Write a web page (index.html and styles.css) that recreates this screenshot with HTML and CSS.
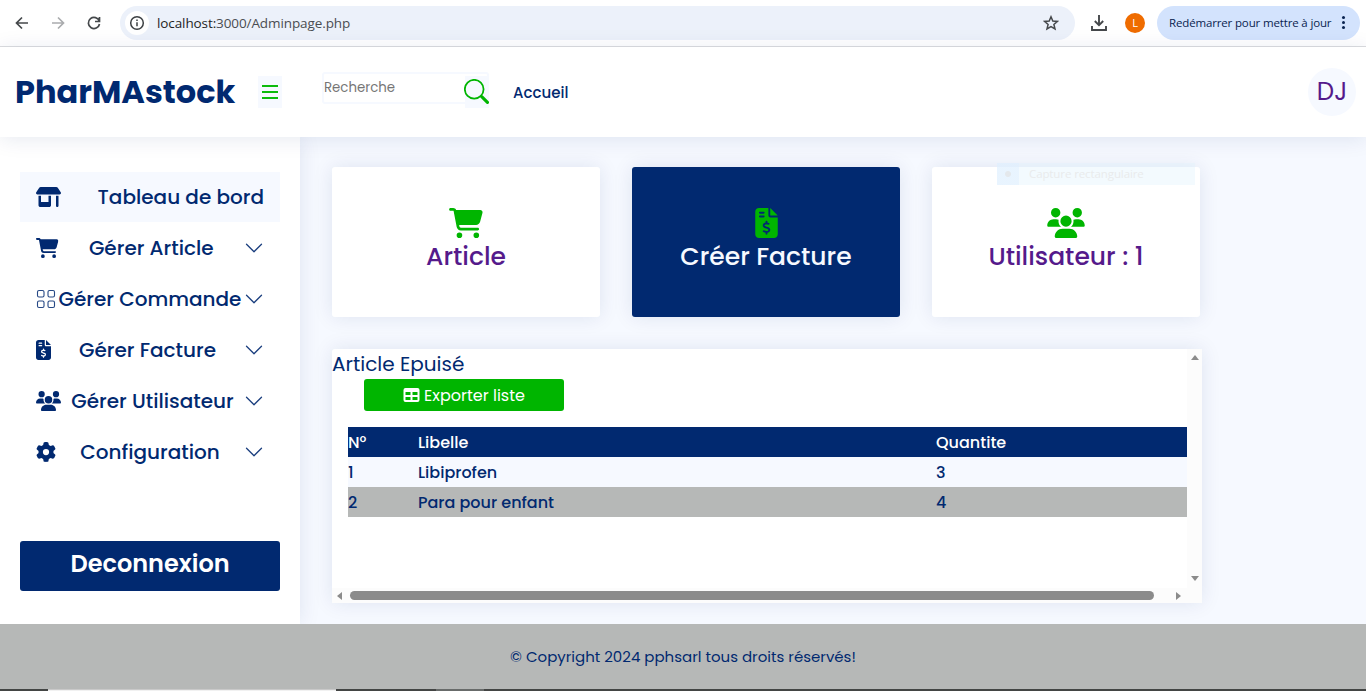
FILE: index.html
```html
<!DOCTYPE html>
<html lang="fr">
<head>
<meta charset="utf-8">
<title>PharMAstock</title>
<link rel="stylesheet" href="styles.css">
</head>
<body>
<svg class="sprite" aria-hidden="true">
  <symbol id="cart" viewBox="0 0 576 512"><path d="M0 24C0 10.7 10.7 0 24 0H69.5c22 0 41.5 12.8 50.6 32h411c26.3 0 45.5 25 38.6 50.4l-41 152.3c-8.5 31.4-37 53.3-69.5 53.3H170.7l5.4 28.5c2.2 11.3 12.1 19.5 23.6 19.5H488c13.3 0 24 10.7 24 24s-10.7 24-24 24H199.7c-34.6 0-64.3-24.6-70.7-58.5L77.4 54.5c-.7-3.8-4-6.5-7.9-6.5H24C10.7 48 0 37.3 0 24zM128 464a48 48 0 1 1 96 0 48 48 0 1 1 -96 0zm336-48a48 48 0 1 1 0 96 48 48 0 1 1 0-96z"/></symbol>
  <symbol id="invoice" viewBox="0 0 384 512"><path d="M64 0C28.7 0 0 28.7 0 64V448c0 35.3 28.7 64 64 64H320c35.3 0 64-28.7 64-64V160H256c-17.7 0-32-14.3-32-32V0H64zM256 0V128H384L256 0zM64 80c0-8.8 7.2-16 16-16h64c8.8 0 16 7.2 16 16s-7.2 16-16 16H80c-8.8 0-16-7.2-16-16zm0 64c0-8.8 7.2-16 16-16h64c8.8 0 16 7.2 16 16s-7.2 16-16 16H80c-8.8 0-16-7.2-16-16zm128 72c8.8 0 16 7.2 16 16v17.3c8.5 1.2 16.7 3.1 24.1 5.1c8.5 2.3 13.6 11 11.3 19.6s-11 13.6-19.6 11.3c-11.1-3-22-5.2-32.1-5.3c-8.4-.1-17.4 1.8-23.6 5.5c-5.7 3.4-8.1 7.3-8.1 12.8c0 3.7 1.3 6.5 7.3 10.1c6.9 4.1 16.6 7.1 29.2 10.9l.5 .1c11.3 3.4 25.3 7.6 36.3 14.6c12.1 7.6 22.4 19.7 22.7 38.2c.3 19.3-9.6 33.3-22.9 41.6c-7.7 4.8-16.4 7.6-25.1 9.1V440c0 8.8-7.2 16-16 16s-16-7.2-16-16V422.2c-11.2-2.1-21.7-5.7-30.9-8.9c-2.1-.7-4.2-1.4-6.2-2.1c-8.4-2.8-12.9-11.9-10.1-20.2s11.9-12.9 20.2-10.1c2.5 .8 4.8 1.6 7.1 2.4c13.6 4.6 24.6 8.4 36.3 8.7c9.1 .3 17.9-1.7 23.7-5.3c5.1-3.2 7.9-7.3 7.8-14c-.1-4.6-1.8-7.8-7.7-11.6c-6.8-4.3-16.5-7.4-29-11.2l-1.6-.5c-11-3.3-24.3-7.3-34.8-13.7c-12-7.2-22.6-18.9-22.7-37.3c-.1-19.4 10.8-32.8 23.8-40.5c7.5-4.4 15.8-7.2 24.1-8.7V232c0-8.8 7.2-16 16-16z"/></symbol>
  <symbol id="users" viewBox="0 0 640 512"><path d="M144 0a80 80 0 1 1 0 160A80 80 0 1 1 144 0zM512 0a80 80 0 1 1 0 160A80 80 0 1 1 512 0zM0 298.7C0 239.8 47.8 192 106.7 192h42.7c15.9 0 31 3.5 44.6 9.7c-1.3 7.2-1.9 14.7-1.9 22.3c0 38.2 16.8 72.5 43.3 96H21.3C9.6 320 0 310.4 0 298.7zM405.3 320c26.6-23.5 42.7-57.8 42.7-96c0-7.6-.7-15-1.9-22.3c13.6-6.3 28.7-9.7 44.6-9.7h42.7C592.2 192 640 239.8 640 298.7c0 11.8-9.6 21.3-21.3 21.3H405.3zM224 224a96 96 0 1 1 192 0 96 96 0 1 1 -192 0zM128 485.3C128 411.7 187.7 352 261.3 352H378.7C452.3 352 512 411.7 512 485.3c0 14.7-11.9 26.7-26.7 26.7H154.7c-14.7 0-26.7-11.9-26.7-26.7z"/></symbol>
  <symbol id="gear" viewBox="0 0 512 512"><path d="M495.9 166.6c3.2 8.7 .5 18.4-6.4 24.6l-43.3 39.4c1.1 8.3 1.7 16.8 1.7 25.4s-.6 17.1-1.7 25.4l43.3 39.4c6.9 6.2 9.6 15.9 6.4 24.6c-4.4 11.9-9.7 23.3-15.8 34.3l-4.7 8.1c-6.6 11-14 21.4-22.1 31.2c-5.9 7.2-15.7 9.6-24.5 6.8l-55.7-17.7c-13.4 10.3-28.2 18.9-44 25.4l-12.5 57.1c-2 9.1-9 16.3-18.2 17.8c-13.8 2.3-28 3.5-42.5 3.5s-28.7-1.2-42.5-3.5c-9.2-1.5-16.2-8.7-18.2-17.8l-12.5-57.1c-15.8-6.5-30.6-15.1-44-25.4L83.1 425.9c-8.8 2.8-18.6 .3-24.5-6.8c-8.1-9.8-15.5-20.2-22.1-31.2l-4.7-8.1c-6.1-11-11.4-22.4-15.8-34.3c-3.2-8.7-.5-18.4 6.4-24.6l43.3-39.4C64.6 273.1 64 264.6 64 256s.6-17.1 1.7-25.4L22.4 191.2c-6.9-6.2-9.6-15.9-6.4-24.6c4.4-11.9 9.7-23.3 15.8-34.3l4.7-8.1c6.6-11 14-21.4 22.1-31.2c5.9-7.2 15.7-9.6 24.5-6.8l55.7 17.7c13.4-10.3 28.2-18.9 44-25.4l12.5-57.1c2-9.1 9-16.3 18.2-17.8C227.3 1.2 241.5 0 256 0s28.7 1.2 42.5 3.5c9.2 1.5 16.2 8.7 18.2 17.8l12.5 57.1c15.8 6.5 30.6 15.1 44 25.4l55.7-17.7c8.8-2.8 18.6-.3 24.5 6.8c8.1 9.8 15.5 20.2 22.1 31.2l4.7 8.1c6.1 11 11.4 22.4 15.8 34.3zM256 336a80 80 0 1 0 0-160 80 80 0 1 0 0 160z"/></symbol>
  <symbol id="shop" viewBox="0 0 640 512"><path d="M36.8 192H603.2c20.3 0 36.8-16.5 36.8-36.8c0-7.3-2.2-14.4-6.2-20.4L558.2 21.4C549.3 8 534.4 0 518.3 0H121.7c-16 0-31 8-39.9 21.4L6.2 134.7c-4 6.1-6.2 13.2-6.2 20.4C0 175.5 16.5 192 36.8 192zM64 224V384v80c0 26.5 21.5 48 48 48H336c26.5 0 48-21.5 48-48V384 224H320V384H128V224H64zm448 0V480c0 17.7 14.3 32 32 32s32-14.3 32-32V224H512z"/></symbol>
  <symbol id="chevron" viewBox="0 0 16 16"><path d="M1.646 4.646a.5.5 0 0 1 .708 0L8 10.293l5.646-5.647a.5.5 0 0 1 .708.708l-6 6a.5.5 0 0 1-.708 0l-6-6a.5.5 0 0 1 0-.708"/></symbol>
  <symbol id="table" viewBox="0 0 512 448"><path fill-rule="evenodd" d="M64 0H448a64 64 0 0 1 64 64V384a64 64 0 0 1-64 64H64a64 64 0 0 1-64-64V64A64 64 0 0 1 64 0zM64 128V224H224V128zM288 128V224H448V128zM64 288V384H224V288zM288 288V384H448V288z"/></symbol>
</svg>

<div class="browser">
  <svg class="nav-ico" viewBox="0 0 16 16"><path d="M14 8H3M8 2.500 2.500 8 8 13.500"/></svg>
  <svg class="nav-ico dim" viewBox="0 0 16 16"><path d="M2 8h11M8 2.500 13.500 8 8 13.500"/></svg>
  <svg class="nav-ico" viewBox="0 0 16 16"><path d="M13.300 6.200A5.600 5.600 0 1 0 13.500 9M13.500 2v4.500H9"/></svg>
  <div class="address">
    <span class="info"><svg viewBox="0 0 16 16"><circle cx="8" cy="8" r="6.300"/><path d="M8 7.200v4M8 4.400v1.500"/></svg></span>
    <span class="url"><b>localhost:</b>3000/Adminpage.php</span>
    <svg class="star" viewBox="0 0 16 16"><path d="M8 1.800 9.800 6l4.600.4-3.500 3 1.100 4.500L8 11.500l-4 2.400 1.100-4.500-3.500-3L6.200 6z"/></svg>
  </div>
  <svg class="download" viewBox="0 0 18 18"><path d="M9 1v10M4.800 7 9 11.200 13.200 7M2 12v4h14v-4"/></svg>
  <span class="profile">L</span>
  <div class="update"><span>Redémarrer pour mettre à jour</span><i class="dots"></i></div>
</div>

<header class="topbar">
  <h1>PharMAstock</h1>
  <span class="burger"><i></i><i></i><i></i></span>
  <div class="search"><span>Recherche</span>
    <span class="search-btn"><svg viewBox="0 0 24 24"><circle cx="9.800" cy="9.800" r="9"/><path class="handle" d="m17 17 5.500 5.500"/></svg></span>
  </div>
  <a class="home">Accueil</a>
  <span class="avatar">DJ</span>
</header>

<div class="layout">
  <aside class="sidebar">
    <nav>
      <a class="item active"><svg class="w25"><use href="#shop"/></svg><span>Tableau de bord</span></a>
      <a class="item"><svg class="w23"><use href="#cart"/></svg><span>Gérer Article</span><svg class="w20 chev"><use href="#chevron"/></svg></a>
      <a class="item"><svg class="w20 grid" viewBox="0 0 20 20"><rect x="1.500" y="1.500" width="6.500" height="6.500" rx="1.500"/><rect x="12" y="1.500" width="6.500" height="6.500" rx="1.500"/><rect x="1.500" y="12" width="6.500" height="6.500" rx="1.500"/><rect x="12" y="12" width="6.500" height="6.500" rx="1.500"/></svg><span>Gérer Commande</span><svg class="w20 chev"><use href="#chevron"/></svg></a>
      <a class="item"><svg class="w15"><use href="#invoice"/></svg><span>Gérer Facture</span><svg class="w20 chev"><use href="#chevron"/></svg></a>
      <a class="item"><svg class="w25"><use href="#users"/></svg><span>Gérer Utilisateur</span><svg class="w20 chev"><use href="#chevron"/></svg></a>
      <a class="item"><svg class="w20"><use href="#gear"/></svg><span>Configuration</span><svg class="w20 chev"><use href="#chevron"/></svg></a>
    </nav>
    <button class="logout">Deconnexion</button>
  </aside>

  <main>
    <div class="cards">
      <a class="card"><svg class="c34"><use href="#cart"/></svg><span>Article</span></a>
      <a class="card dark"><svg class="c23"><use href="#invoice"/></svg><span>Créer Facture</span></a>
      <a class="card"><svg class="c38"><use href="#users"/></svg><span>Utilisateur : 1</span>
        <div class="snip"><i></i><span>Capture rectangulaire</span></div></a>
    </div>
    <section class="panel">
      <div class="content">
        <h2>Article Epuisé</h2>
        <button class="export"><svg><use href="#table"/></svg>Exporter liste</button>
        <div class="table">
          <div class="row head"><span>N°</span><span>Libelle</span><span>Quantite</span></div>
          <div class="row"><span>1</span><span>Libiprofen</span><span>3</span></div>
          <div class="row alt"><span>2</span><span>Para pour enfant</span><span>4</span></div>
        </div>
      </div>
      <div class="vbar"><i class="up"></i><i class="down"></i></div>
      <div class="hbar"><i class="left"></i><i class="thumb"></i><i class="right"></i></div>
    </section>
  </main>
</div>

<footer>© Copyright 2024 pphsarl tous droits réservés!</footer>
<div class="taskbar"><i class="task-search"></i><i class="task-active"></i></div>
</body>
</html>
```
FILE: styles.css
```css
* { box-sizing: border-box; }
body {
  margin: 0;
  height: 691px;
  overflow: hidden;
  display: flex;
  flex-direction: column;
  background: #f6f9ff;
  color: #012970;
  font-family: Poppins, Inter, sans-serif;
}
.sprite { position: absolute; width: 0; height: 0; }
button { font-family: inherit; border: 0; padding: 0; }

/* browser toolbar */
.browser {
  flex: 0 0 47px;
  display: flex;
  align-items: center;
  padding: 0 6px 1px 14px;
  background: #fff;
  border-bottom: 1px solid #dcdddf;
  font-family: "Segoe UI", "Open Sans", sans-serif;
}
.nav-ico { width: 16px; height: 16px; margin-right: 20px; fill: none; stroke: #45484b; stroke-width: 1.7; }
.nav-ico.dim { stroke: #aaacae; }
.nav-ico:nth-of-type(3) { margin-right: 18px; }
.address {
  width: 955px;
  height: 34px;
  border-radius: 17px;
  background: #ecf1fa;
  display: flex;
  align-items: center;
  padding: 0 16px 0 5px;
}
.info { width: 24px; height: 24px; border-radius: 50%; background: #fff; display: grid; place-items: center; }
.info svg { width: 16px; height: 16px; fill: none; stroke: #3c4043; stroke-width: 1.5; }
.url { margin-left: 8px; flex: 1; font-size: 13.5px; letter-spacing: -.1px; color: #4a4d51; }
.url b { font-weight: 400; color: #1f1f1f; }
.star { width: 16px; height: 16px; fill: none; stroke: #45484b; stroke-width: 1.5; }
.download { width: 18px; height: 18px; margin-left: 15px; fill: none; stroke: #45484b; stroke-width: 1.9; }
.profile {
  width: 20px; height: 20px; margin-left: 17px;
  border-radius: 50%;
  background: #ef6c00; color: #fff;
  font-size: 11px; line-height: 20px; text-align: center;
}
.update {
  margin-left: 12px;
  width: 203px; height: 34px;
  border-radius: 17px;
  background: #d3e3fd; color: #0a2350;
  display: flex; align-items: center;
  padding-left: 12px;
  font-size: 11.5px; letter-spacing: -.15px; white-space: nowrap;
}
.dots { width: 3px; height: 3px; margin-left: 11px; border-radius: 50%; background: #0a2350; box-shadow: 0 -5px #0a2350, 0 5px #0a2350; }

/* site header */
.topbar {
  position: relative;
  z-index: 2;
  flex: 0 0 90px;
  display: flex;
  align-items: center;
  padding: 0 10px 0 15px;
  background: #fff;
  box-shadow: 0 2px 20px rgba(1, 41, 112, .1);
}
h1 { margin: 0; width: 243px; font-size: 32px; line-height: 48px; font-weight: 700; }
.burger { width: 24px; height: 32px; padding: 9px 4px 9px; background: #f6f9ff; display: flex; flex-direction: column; justify-content: space-between; }
.burger i { height: 2px; background: #0dbb0d; }
.search {
  position: relative;
  width: 167px; height: 32px;
  margin: -8px 0 0 40px;
  border: 2px solid #f6f9ff; border-radius: 3px;
  color: #757575;
  font-size: 13.33px; line-height: 27px;
}
.search-btn { position: absolute; left: 141px; top: 2px; width: 24px; height: 32px; background: #f6f9ff; }
.search-btn svg { display: block; width: 25px; height: 25px; margin: 3px 0 0 -1px; fill: none; stroke: #00b500; stroke-width: 1.7; }
.search-btn .handle { stroke-width: 3; stroke-linecap: round; }
.home { margin: 0 0 0 24px; flex: 1; font-size: 15px; font-weight: 500; }
.avatar { width: 48px; height: 48px; border-radius: 50%; background: #f6f9ff; color: #551a8b; font-size: 24.5px; line-height: 48px; text-align: center; }

/* sidebar */
.layout { flex: 0 0 487px; display: flex; }
.sidebar {
  flex: 0 0 300px;
  padding: 35px 20px 33px;
  background: #fff;
  box-shadow: 0 0 20px rgba(1, 41, 112, .1);
  display: flex; flex-direction: column; justify-content: space-between;
}
nav { display: grid; gap: 1px; }
.item { height: 50px; padding: 0 16px; display: flex; align-items: center; justify-content: space-between; font-size: 20px; font-weight: 500; white-space: nowrap; }
.item.active { background: #f6f9ff; }
.item svg { height: 20px; fill: #012970; flex: none; }
.item svg.chev { opacity: .9; }
.item svg.grid { fill: none; stroke: #012970; stroke-width: 1.1; opacity: .85; }
.w25 { width: 25px; }
.w23 { width: 22.5px; }
.w20 { width: 20px; }
.w15 { width: 15px; }
.logout { height: 50px; padding-bottom: 5px; border-radius: 3px; background: #012970; color: #fff; font-size: 24px; font-weight: 600; }

/* dashboard */
main { padding: 30px 32px 0; }
.cards { display: flex; gap: 32px; }
.card {
  position: relative;
  width: 268px; height: 150px; padding-top: 41px;
  border-radius: 3px;
  background: #fff; color: #551a8b;
  box-shadow: 0 0 20px rgba(1, 41, 112, .1);
  display: flex; flex-direction: column; align-items: center;
  font-size: 25px; line-height: 37px; font-weight: 500;
}
.card.dark { background: #012970; color: #f6f9ff; }
.card svg { height: 30px; fill: #00b500; }
.c34 { width: 34px; }
.c23 { width: 23px; }
.c38 { width: 38px; }
.snip {
  position: absolute; left: 65px; top: -4px;
  width: 198px; height: 22px;
  display: flex; align-items: center;
  background: rgba(226, 243, 253, .4);
  color: #e9ebec;
  font: 400 11.5px/22px "Segoe UI", "Open Sans", sans-serif; letter-spacing: -.1px;
}
.snip i { width: 22px; height: 22px; margin-right: 10px; background: radial-gradient(circle, #e4e8ec 2.5px, rgba(222, 238, 255, .5) 3.5px); }

.panel {
  margin-top: 32px;
  width: 870px; height: 254px;
  display: grid;
  grid-template: 239px 15px / 855px 15px;
  background: #fff;
  border-radius: 3px 0 0 0;
  box-shadow: 0 0 20px rgba(1, 41, 112, .1);
}
h2 { margin: 0; font-size: 20px; line-height: 30px; font-weight: 400; }
.export {
  display: flex; align-items: center; justify-content: center; gap: 4px;
  width: 200px; height: 32px; margin: 0 0 16px 32px;
  border-radius: 3px; background: #00b500; color: #fff;
  font-size: 16px; font-weight: 400;
}
.export svg { width: 17px; height: 14px; fill: #fff; }
.table { margin-left: 16px; }
.row { display: grid; grid-template-columns: 70px 518px 1fr; height: 30px; padding-top: 1px; font-size: 16px; line-height: 30px; font-weight: 500; background: #f6f9ff; }
.row.head { background: #012970; color: #fff; }
.row.alt { background: #b6b8b7; }
.vbar { background: #fcfcfc; display: flex; flex-direction: column; justify-content: space-between; align-items: center; padding: 6px 0 7px; }
.up, .down { border: solid transparent; border-width: 0 4.5px; }
.up { border-bottom: 5px solid #8b8b8b; }
.down { border-top: 5px solid #8b8b8b; }
.hbar { grid-column: 1 / 3; background: #fcfcfc; display: flex; align-items: center; padding-left: 5px; }
.left, .right { border: solid transparent; border-width: 4.500px 0; }
.left { border-right: 5px solid #8b8b8b; margin-right: 8px; }
.right { border-left: 5px solid #8b8b8b; margin-left: 22px; }
.thumb { width: 804px; height: 9px; border-radius: 5px; background: #8b8b8b; }

footer { position: relative; flex: 0 0 64px; background: #b6b8b7; text-align: center; font-size: 15px; line-height: 65px; }
.taskbar { position: relative; flex: 0 0 3px; background: #434544; display: flex; padding-left: 48px; }
.task-search { width: 288px; background: #f1f1f1; border-top: 1px solid #c9c9c9; }
.task-active { width: 48px; margin-left: 100px; background: #686b6a; }
```
